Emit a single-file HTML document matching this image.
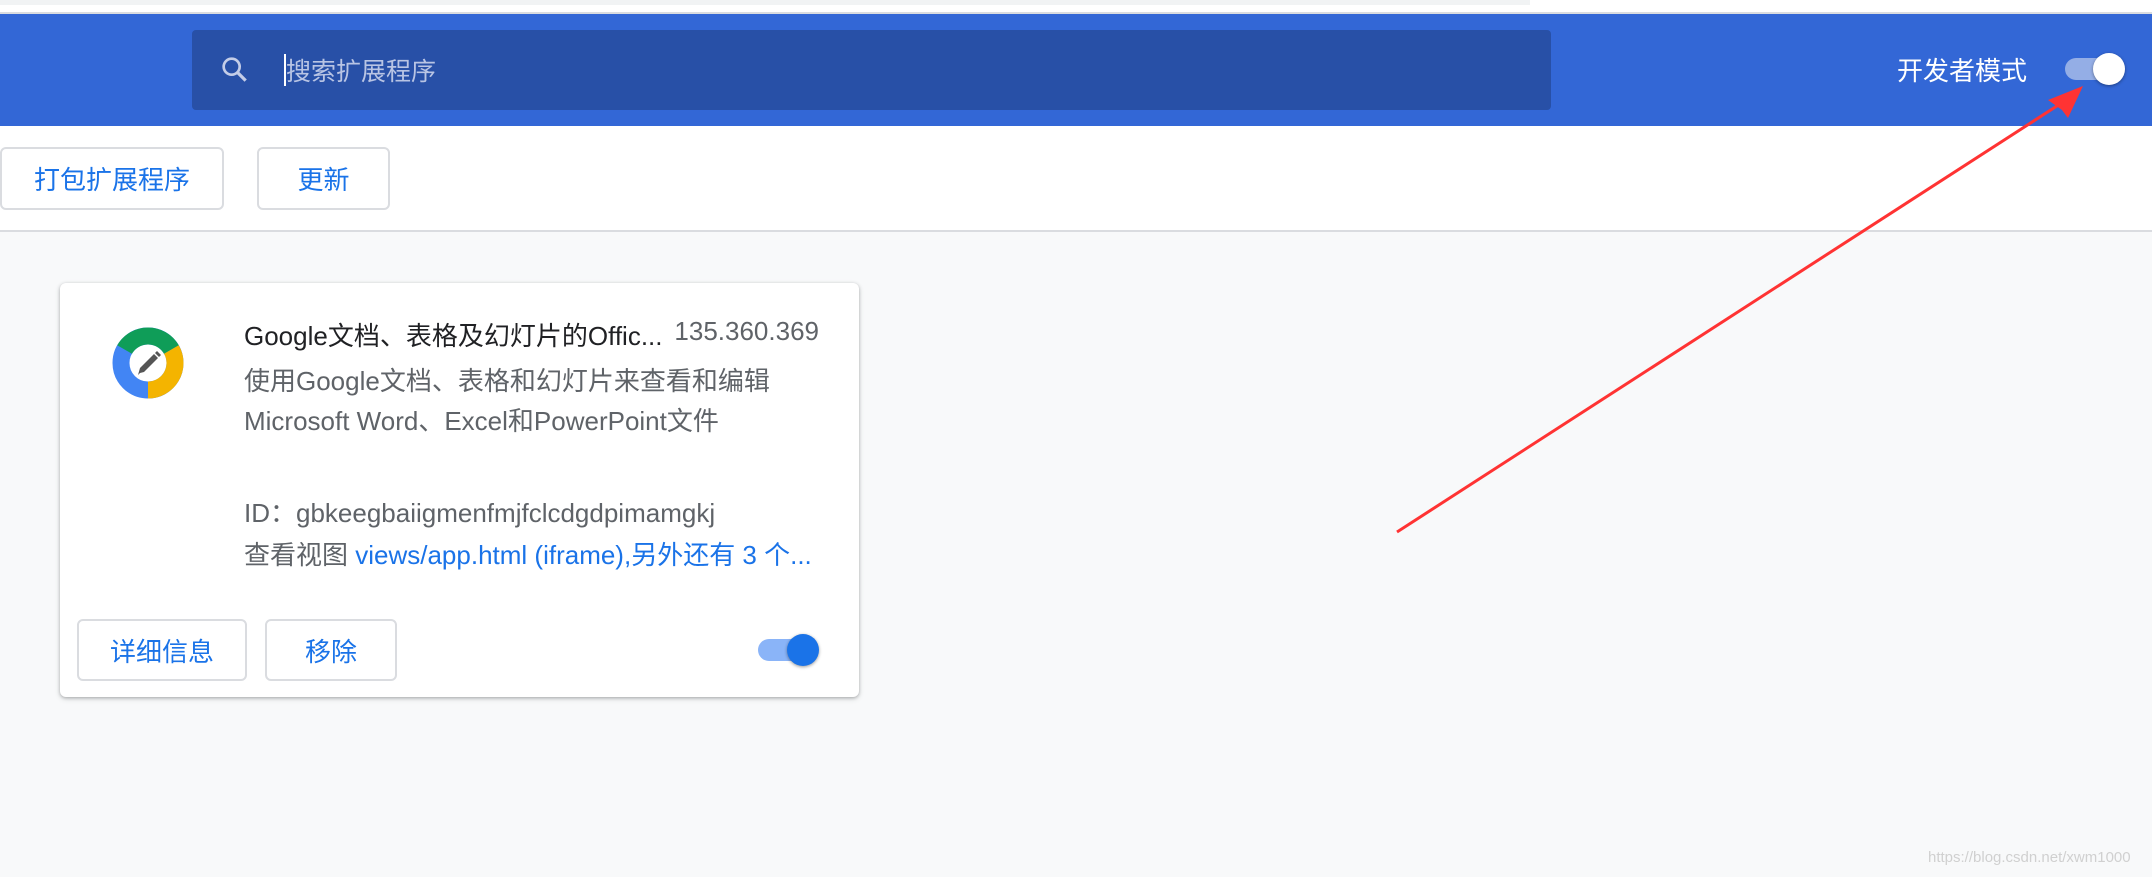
<!DOCTYPE html>
<html><head><meta charset="utf-8"><style>
*{margin:0;padding:0;box-sizing:border-box}
body{width:2152px;height:877px;overflow:hidden;background:#f8f9fa;font-family:"Liberation Sans","Noto Sans CJK SC",sans-serif;position:relative}
.abs{position:absolute}
.btn{position:absolute;border:2px solid #dadce0;border-radius:6px;background:#fff;color:#1a73e8;font-size:26px;display:flex;align-items:center;justify-content:center}
</style></head><body>
<div class="abs" style="left:0;top:0;width:2152px;height:14px;background:#fff"></div>
<div class="abs" style="left:0;top:0;width:1530px;height:5px;background:#f1f3f4"></div>
<div class="abs" style="left:0;top:12px;width:2152px;height:2px;background:#dadce0"></div>
<div class="abs" style="left:0;top:14px;width:2152px;height:112px;background:#3367d6"></div>
<div class="abs" style="left:192px;top:30px;width:1359px;height:80px;background:#2850a7;border-radius:4px"></div>
<svg class="abs" style="left:219px;top:54px" width="32" height="32" viewBox="0 0 24 24"><circle cx="9.5" cy="9.5" r="6" fill="none" stroke="#c4cde8" stroke-width="2"/><path d="M14 14l6 6" stroke="#c4cde8" stroke-width="2.4"/></svg>
<div class="abs" style="left:284px;top:54px;width:2px;height:32px;background:#fff"></div>
<div class="abs" style="left:286px;top:52px;font-size:25px;color:#b8c4e4">搜索扩展程序</div>
<div class="abs" style="left:1897px;top:51px;font-size:26px;color:#fff">开发者模式</div>
<div class="abs" style="left:2065px;top:58px;width:55px;height:22px;border-radius:11px;background:#94aee6"></div>
<div class="abs" style="left:2093px;top:53px;width:32px;height:32px;border-radius:50%;background:#fff;box-shadow:0 1px 3px rgba(0,0,0,.4)"></div>
<div class="abs" style="left:0;top:126px;width:2152px;height:106px;background:#fff;border-bottom:2px solid #dadce0"></div>
<div class="btn" style="left:0;top:147px;width:224px;height:63px">打包扩展程序</div>
<div class="btn" style="left:257px;top:147px;width:133px;height:63px">更新</div>
<div class="abs" style="left:60px;top:283px;width:799px;height:414px;background:#fff;border-radius:6px;box-shadow:0 1px 3px rgba(60,64,67,.35),0 2px 6px rgba(60,64,67,.15)"></div>
<svg class="abs" style="left:110px;top:325px" width="76" height="76" viewBox="-38 -38 76 76">
<circle r="27" fill="none" stroke="#4285f4" stroke-width="17"/>
<path d="M-23.4,-13.5 A27,27 0 0 1 23.4,-13.5" fill="none" stroke="#0f9d58" stroke-width="17"/>
<path d="M23.4,-13.5 A27,27 0 0 1 0,27" fill="none" stroke="#f4b400" stroke-width="17"/>
<path d="M-8,10 L-10,12 -8,5 6,-9 10,-5 -4,9Z M7,-10 L9,-12 13,-8 11,-6Z" fill="#555"/>
</svg>
<div class="abs" style="left:244px;top:316px;font-size:26px;color:#202124;white-space:nowrap">Google文档、表格及幻灯片的Offic...</div>
<div class="abs" style="left:619px;width:200px;text-align:right;top:316px;font-size:26px;color:#5f6368">135.360.369</div>
<div class="abs" style="left:244px;top:361px;font-size:26px;color:#5f6368;line-height:40px;white-space:nowrap">使用Google文档、表格和幻灯片来查看和编辑<br>Microsoft Word、Excel和PowerPoint文件</div>
<div class="abs" style="left:244px;top:493px;font-size:26px;color:#5f6368;white-space:nowrap">ID：gbkeegbaiigmenfmjfclcdgdpimamgkj</div>
<div class="abs" style="left:244px;top:535px;font-size:26px;color:#5f6368;white-space:nowrap">查看视图 <span style="color:#1a73e8">views/app.html (iframe),另外还有 3 个...</span></div>
<div class="btn" style="left:77px;top:619px;width:170px;height:62px">详细信息</div>
<div class="btn" style="left:265px;top:619px;width:132px;height:62px">移除</div>
<div class="abs" style="left:758px;top:639px;width:56px;height:22px;border-radius:11px;background:#8ab4f8"></div>
<div class="abs" style="left:787px;top:634px;width:32px;height:32px;border-radius:50%;background:#1a73e8;box-shadow:0 1px 3px rgba(0,0,0,.4)"></div>
<svg class="abs" style="left:0;top:0" width="2152" height="877">
<path d="M1397,532 L2060,104" stroke="#f33" stroke-width="3"/>
<path d="M2083,86 L2048,100 2062,110 2068,118Z" fill="#f33"/>
</svg>
<div class="abs" style="left:1928px;top:849px;font-size:15px;color:#d0d0d0">https://blog.csdn.net/xwm1000</div>
</body></html>
